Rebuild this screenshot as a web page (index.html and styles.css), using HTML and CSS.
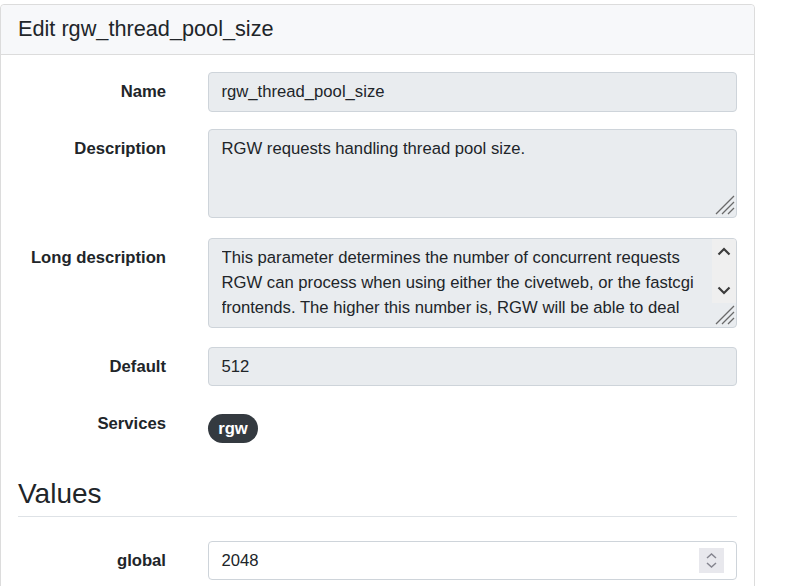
FILE: index.html
```html
<!DOCTYPE html>
<html lang="en">
<head>
<meta charset="utf-8">
<title>Edit rgw_thread_pool_size</title>
<link rel="stylesheet" href="styles.css">
</head>
<body>
<div class="card">
  <div class="card-header">
    <h2 class="card-title">Edit rgw_thread_pool_size</h2>
  </div>
  <div class="card-body">
    <div class="form-row row-name">
      <label class="form-label">Name</label>
      <div class="field readonly">rgw_thread_pool_size</div>
    </div>

    <div class="form-row row-desc">
      <label class="form-label">Description</label>
      <div class="field readonly textbox">
        <div class="textbox-text">RGW requests handling thread pool size.</div>
        <div class="textbox-side">
          <span class="side-spacer"></span>
          <span class="grip">
            <svg width="20" height="20" viewBox="0 0 20 20"><path d="M1 19L19 1M7 19L19 7M13 19L19 13" stroke="#6a6a6a" stroke-width="1.3" fill="none"/></svg>
          </span>
        </div>
      </div>
    </div>

    <div class="form-row row-long">
      <label class="form-label">Long description</label>
      <div class="field readonly textbox">
        <div class="textbox-text">This parameter determines the number of concurrent requests RGW can process when using either the civetweb, or the fastcgi frontends. The higher this number is, RGW will be able to deal with more concurrent requests at the cost of more resource utilization.</div>
        <div class="textbox-side">
          <span class="scrolltrack">
            <span class="scroll-btn">
              <svg width="14" height="9" viewBox="0 0 14 9"><path d="M1.5 7.5L7 2L12.5 7.5" stroke="#3c3c3c" stroke-width="2.2" fill="none"/></svg>
            </span>
            <span class="scroll-btn">
              <svg width="14" height="9" viewBox="0 0 14 9"><path d="M1.5 1.5L7 7L12.5 1.5" stroke="#3c3c3c" stroke-width="2.2" fill="none"/></svg>
            </span>
          </span>
          <span class="grip">
            <svg width="20" height="20" viewBox="0 0 20 20"><path d="M1 19L19 1M7 19L19 7M13 19L19 13" stroke="#6a6a6a" stroke-width="1.3" fill="none"/></svg>
          </span>
        </div>
      </div>
    </div>

    <div class="form-row row-default">
      <label class="form-label">Default</label>
      <div class="field readonly">512</div>
    </div>

    <div class="form-row row-services">
      <label class="form-label">Services</label>
      <div class="badges"><span class="badge">rgw</span></div>
    </div>

    <h3 class="section-title">Values</h3>

    <div class="form-row row-global">
      <label class="form-label">global</label>
      <div class="field number">
        <span class="number-value">2048</span>
        <span class="spinner">
          <svg width="25" height="25" viewBox="0 0 25 25"><rect width="25" height="25" fill="#e8e8ed"/><path d="M8 10L12.5 6L17 10" stroke="#85858f" stroke-width="1.5" fill="none"/><path d="M8 15L12.5 19L17 15" stroke="#85858f" stroke-width="1.5" fill="none"/></svg>
        </span>
      </div>
    </div>
  </div>
</div>
</body>
</html>
```

FILE: styles.css
```css
html, body {
  margin: 0;
  padding: 0;
  overflow: hidden;
  background: #ffffff;
}

body {
  font-family: "Liberation Sans", Arial, sans-serif;
  font-size: 16.67px;
  line-height: 25px;
  color: #212529;
}

.card {
  margin-top: 4px;
  width: 755px;
  box-sizing: border-box;
  border: 1px solid #dcdcdc;
  border-radius: 4px;
  background: #ffffff;
}

.card-header {
  height: 50px;
  box-sizing: border-box;
  padding: 0 17px;
  display: flex;
  align-items: center;
  background: #f7f8fa;
  border-bottom: 1px solid #dcdcdc;
  border-radius: 4px 4px 0 0;
}

.card-title {
  margin: 0;
  font-size: 21.7px;
  font-weight: 400;
  line-height: 26px;
  padding-bottom: 1px;
}

.card-body {
  padding: 17px 17px 60px 17px;
}

.form-row {
  display: grid;
  grid-template-columns: 148px 1fr;
  column-gap: 42px;
  align-items: start;
}

.row-name { margin-bottom: 17px; }
.row-desc { margin-bottom: 20px; }
.row-long { margin-bottom: 19px; }
.row-default { margin-bottom: 18px; }
.row-services { margin-bottom: 34px; }

.form-label {
  font-weight: 700;
  text-align: right;
  padding-top: 7.25px;
  line-height: 25px;
}

.field {
  box-sizing: border-box;
  height: 39.5px;
  border: 1px solid #ced4da;
  border-radius: 4px;
  padding: 6.25px 12.5px;
  line-height: 25px;
}

.readonly {
  background: #e9ecef;
}

.textbox {
  display: flex;
  align-items: flex-start;
  height: 89.5px;
  padding: 0;
  overflow: hidden;
}

.textbox-text {
  flex: 1;
  min-width: 0;
  height: 75px;
  margin: 6.25px 12.5px;
  overflow: hidden;
}

.textbox-side {
  width: 24px;
  height: 100%;
  display: flex;
  flex-direction: column;
}

.side-spacer {
  flex: 1;
}

.scrolltrack {
  flex: 1;
  display: flex;
  flex-direction: column;
  justify-content: space-between;
  background: #efefef;
}

.scroll-btn {
  height: 24px;
  display: flex;
  align-items: center;
  justify-content: center;
}

.grip {
  height: 24px;
  display: flex;
  align-items: flex-end;
  justify-content: flex-end;
  padding: 0 1px 2px 0;
  box-sizing: border-box;
}

.badges {
  padding-top: 9.5px;
}

.badge {
  display: inline-block;
  background: #343a40;
  color: #ffffff;
  font-weight: 700;
  line-height: 29px;
  height: 29px;
  padding: 0 10.2px;
  border-radius: 15px;
}

.section-title {
  margin: 0 0 24.5px 0;
  font-size: 28px;
  font-weight: 400;
  line-height: 33.6px;
  padding-bottom: 5.5px;
  border-bottom: 1px solid #dee2e6;
}

.number {
  display: flex;
  align-items: center;
  padding-right: 12px;
  background: #ffffff;
  height: 39px;
}

.number-value {
  flex: 1;
}

.spinner {
  display: flex;
  width: 25px;
  height: 25px;
}
```
